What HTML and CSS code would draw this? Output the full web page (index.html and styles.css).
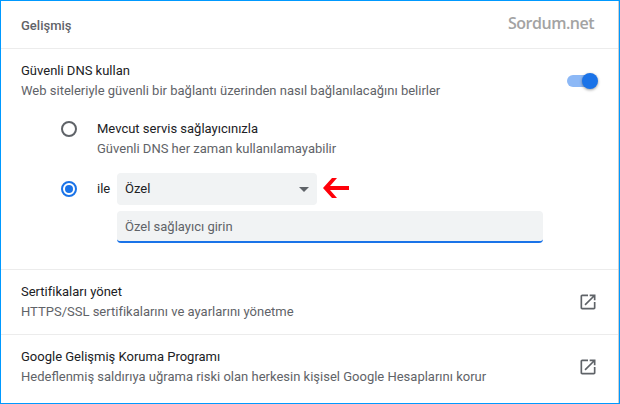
FILE: index.html
```html
<!DOCTYPE html>
<html lang="tr">
<head>
    <meta charset="UTF-8">
    <meta name="viewport" content="width=device-width, initial-scale=1.0">
    <title>Gelişmiş</title>
    <link rel="stylesheet" href="styles.css">
</head>
<body>
<main class="card">
    <header class="card-header">
        <h2>Gelişmiş</h2>
        <span class="brand">Sordum.net</span>
    </header>

    <section class="dns">
        <div class="row">
            <div class="text">
                <div class="title">Güvenli DNS kullan</div>
                <div class="sub">Web siteleriyle güvenli bir bağlantı üzerinden nasıl bağlanılacağını belirler</div>
            </div>
            <div class="toggle"><span class="knob"></span></div>
        </div>

        <div class="option">
            <span class="radio"></span>
            <div class="text">
                <div class="title">Mevcut servis sağlayıcınızla</div>
                <div class="sub">Güvenli DNS her zaman kullanılamayabilir</div>
            </div>
        </div>

        <div class="option option-custom">
            <span class="radio checked"></span>
            <span class="title with">ile</span>
            <div class="select">
                <span>Özel</span>
                <svg width="10" height="5" viewBox="0 0 10 5"><path d="M0 0h10L5 5z" fill="#5f6368"/></svg>
            </div>
            <svg class="arrow" width="26" height="20" viewBox="0 0 26 20">
                <path d="M26 8H7l7-8H9L0 10l9 10h5l-7-8h19z" fill="#ff0009"/>
            </svg>
        </div>
        <div class="field">Özel sağlayıcı girin</div>
    </section>

    <section class="row link-row">
        <div class="text">
            <div class="title">Sertifikaları yönet</div>
            <div class="sub">HTTPS/SSL sertifikalarını ve ayarlarını yönetme</div>
        </div>
        <svg class="open" viewBox="0 0 24 24"><path d="M19 19H5V5h7V3H5c-1.110 0-2 .9-2 2v14c0 1.100.89 2 2 2h14c1.100 0 2-.9 2-2v-7h-2v7zM14 3v2h3.590l-9.830 9.830 1.410 1.410L19 6.410V10h2V3h-7z"/></svg>
    </section>

    <section class="row link-row">
        <div class="text">
            <div class="title">Google Gelişmiş Koruma Programı</div>
            <div class="sub">Hedeflenmiş saldırıya uğrama riski olan herkesin kişisel Google Hesaplarını korur</div>
        </div>
        <svg class="open" viewBox="0 0 24 24"><path d="M19 19H5V5h7V3H5c-1.110 0-2 .9-2 2v14c0 1.100.89 2 2 2h14c1.100 0 2-.9 2-2v-7h-2v7zM14 3v2h3.590l-9.830 9.830 1.410 1.410L19 6.410V10h2V3h-7z"/></svg>
    </section>
</main>
</body>
</html>
```
FILE: styles.css
```css
* {
    box-sizing: border-box;
}
body {
    margin: 0;
    font-family: Roboto, "Liberation Sans", sans-serif;
    font-size: 13px;
    line-height: 20px;
    color: #202124;
    background-color: white;
}
.card {
    height: 404px;
    border: 1px solid #0099ff;
    box-shadow: inset -1px 0 0 #cfcfcf;
    overflow: hidden;
}
.card-header {
    display: flex;
    justify-content: space-between;
    height: 47px;
    padding: 15px 25px 0 20px;
}
.card-header h2 {
    margin: 0;
    font-size: 13px;
    font-weight: 500;
    color: #5f6368;
}
.brand {
    margin-top: -1px;
    font-family: "Open Sans", sans-serif;
    font-size: 16px;
    font-weight: 600;
    line-height: 16px;
    letter-spacing: -0.5px;
    color: #a3a3a3;
}
.dns {
    height: 221px;
    margin-right: 1px;
    padding-top: 12px;
    border-top: 1px solid #ececec;
}
.row {
    display: flex;
    justify-content: space-between;
    align-items: center;
    padding: 0 20px;
}
.text {
    white-space: nowrap;
}
.sub {
    color: #5f6368;
}
.link-row {
    height: 65px;
    margin-right: 1px;
    border-top: 1px solid #ececec;
}
.toggle {
    display: flex;
    justify-content: flex-end;
    align-items: center;
    width: 28px;
    height: 12px;
    margin: 0 3px 0 0;
    border-radius: 6px;
    background-color: #8cb8f6;
}
.knob {
    flex: none;
    width: 16px;
    height: 16px;
    margin-right: -3px;
    border-radius: 50%;
    background-color: #1a73e8;
    box-shadow: 0 1px 3px rgba(0, 0, 0, 0.4);
}
.option {
    display: flex;
    margin: 18px 0 0 60px;
}
.radio {
    flex: none;
    width: 16px;
    height: 16px;
    margin: 2px 20px 0 0;
    border: 2px solid #5f6368;
    border-radius: 50%;
}
.radio.checked {
    margin-top: 0;
    padding: 2px;
    border-color: #1a73e8;
    background: #1a73e8 content-box;
}
.option-custom {
    align-items: center;
    margin-top: 14px;
}
.with {
    width: 20px;
}
.select {
    display: flex;
    justify-content: space-between;
    align-items: center;
    width: 200px;
    height: 32px;
    padding: 0 8px;
    border-radius: 4px;
    background-color: #f1f3f4;
}
.arrow {
    margin: -2px 0 0 6px;
}
.field {
    width: 426px;
    height: 32px;
    margin: 6px 0 0 116px;
    padding: 6px 8px 0;
    border-bottom: 2px solid #1a73e8;
    border-radius: 4px;
    color: #5f6368;
    background-color: #f1f3f4;
}
.open {
    width: 20px;
    height: 20px;
    fill: #5f6368;
}
```
